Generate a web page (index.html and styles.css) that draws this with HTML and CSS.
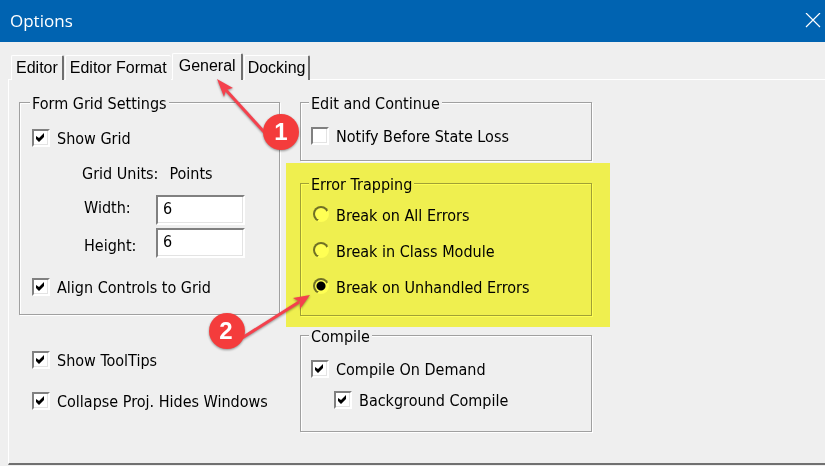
FILE: index.html
```html
<!DOCTYPE html>
<html lang="en">
<head>
<meta charset="utf-8">
<meta name="viewport" content="width=device-width, initial-scale=1">
<title>Options</title>
<link rel="stylesheet" href="styles.css">
</head>
<body>
<main class="dialog">
  <header class="titlebar">
    <h1>Options</h1>
    <button class="close" type="button" aria-label="Close">
      <svg width="16" height="16" viewBox="0 0 16 16" aria-hidden="true"><path d="M1 0 15 14M15 0 1 14" stroke="#fff" stroke-width="1.2" fill="none"/></svg>
    </button>
  </header>

  <div class="tabs" role="tablist">
    <button class="tab" type="button" role="tab">Editor</button>
    <button class="tab tab-wide" type="button" role="tab">Editor Format</button>
    <button class="tab tab-active" type="button" role="tab" aria-selected="true">General</button>
    <button class="tab" type="button" role="tab">Docking</button>
  </div>

  <form class="panel">
    <div class="column">
      <fieldset class="group group-grid">
        <legend>Form Grid Settings</legend>
        <label class="option"><input type="checkbox" checked>Show Grid</label>
        <p class="units"><span>Grid Units:</span><span>Points</span></p>
        <div class="fields">
          <div class="field-labels">
            <label for="grid-width">Width:</label>
            <label for="grid-height">Height:</label>
          </div>
          <div class="field-inputs">
            <input id="grid-width" type="text" value="6">
            <input id="grid-height" type="text" value="6">
          </div>
        </div>
        <label class="option"><input type="checkbox" checked>Align Controls to Grid</label>
      </fieldset>
      <div class="loose">
        <label class="option"><input type="checkbox" checked>Show ToolTips</label>
        <label class="option"><input type="checkbox" checked>Collapse Proj. Hides Windows</label>
      </div>
    </div>

    <div class="column">
      <fieldset class="group group-edit">
        <legend>Edit and Continue</legend>
        <label class="option"><input type="checkbox">Notify Before State Loss</label>
      </fieldset>
      <div class="marked">
        <fieldset class="group group-errors">
          <legend>Error Trapping</legend>
          <label class="option"><input type="radio" name="trap">Break on All Errors</label>
          <label class="option"><input type="radio" name="trap">Break in Class Module</label>
          <label class="option"><input type="radio" name="trap" checked>Break on Unhandled Errors</label>
        </fieldset>
      </div>
      <fieldset class="group group-compile">
        <legend>Compile</legend>
        <label class="option"><input type="checkbox" checked>Compile On Demand</label>
        <label class="option option-nested"><input type="checkbox" checked>Background Compile</label>
      </fieldset>
    </div>
  </form>

  <svg class="callouts" width="340" height="360" viewBox="0 0 340 360" aria-hidden="true">
    <g class="callout">
      <path d="M265 133 225 89" stroke="#f4414d" stroke-width="3"/>
      <path d="M217 79 233 88 226 90 224 97Z" fill="#f4414d"/>
      <circle cx="281" cy="132" r="18"/>
      <text x="281" y="140">1</text>
    </g>
    <g class="callout">
      <path d="M242 338 299 302" stroke="#f4414d" stroke-width="3"/>
      <path d="M310 295 300 309 300 302 293 298Z" fill="#f4414d"/>
      <circle cx="227" cy="331" r="18"/>
      <text x="226" y="339">2</text>
    </g>
  </svg>
</main>
</body>
</html>
```
FILE: styles.css
```css
* { box-sizing: border-box; }

body {
  margin: 0;
  background: #efefef;
  color: #000;
  font: 16px/20px "DejaVu Sans Condensed", "Noto Sans", sans-serif;
}

.dialog { position: relative; }

.titlebar {
  display: flex;
  align-items: center;
  justify-content: space-between;
  height: 42px;
  padding: 0 4px 0 10px;
  background: #0063b1;
  color: #fff;
}

.titlebar h1 {
  margin: 0;
  font: 400 17px/20px "Open Sans", sans-serif;
}

.close {
  display: flex;
  padding: 0;
  border: 0;
  background: none;
}

.tabs {
  display: flex;
  align-items: flex-end;
  gap: 1px;
  height: 38px;
  padding-left: 11px;
}

.tab {
  height: 25px;
  padding: 0 4px;
  border: 1px solid #fff;
  border-right: 2px solid #707070;
  border-bottom: 0;
  border-radius: 2px 2px 0 0;
  background: #efefef;
  color: #000;
  font: 16px/24px "Liberation Sans", sans-serif;
}

.tab:last-child { padding: 0 3px; }

.tab-wide { border-right: 0; }

.tab-active {
  position: relative;
  height: 27px;
  padding: 0 5px 3px 6px;
}

.panel {
  display: flex;
  gap: 20px;
  margin: -1px 0 0 8px;
  padding: 12px 10px 31px;
  border: solid;
  border-width: 1px 0 2px 1px;
  border-color: #fff #fff #707070;
}

.column:first-child { width: 261px; }
.column:last-child { width: 292px; }

.group {
  min-width: 0;
  margin: 0;
  padding: 0 10px;
  border: 1px solid #a0a0a0;
  box-shadow: 1px 1px #fff, inset 1px 1px #fff;
}

legend {
  margin-left: -2px;
  padding: 4px 2px 0;
  background: #efefef;
  line-height: 16px;
}

.option {
  display: flex;
  align-items: flex-start;
  gap: 7px;
  height: 20px;
  line-height: 22px;
  white-space: nowrap;
}

input {
  flex: none;
  margin: 0;
  appearance: none;
}

input[type="checkbox"] {
  width: 18px;
  height: 18px;
  margin-top: 1px;
  border: 2px solid;
  border-color: #808080 #fff #fff #808080;
  background: #fff;
  box-shadow: inset -1px -1px #e3e3e3;
}

input[type="checkbox"]:checked {
  background: #fff url("data:image/svg+xml,%3Csvg xmlns='http://www.w3.org/2000/svg' viewBox='0 0 14 14'%3E%3Cpath d='M2 5v3l3 3 5-5V2L5 7Z'/%3E%3C/svg%3E") center / 14px 14px;
}

input[type="radio"] {
  --dot: #fff;
  width: 16px;
  height: 16px;
  margin: 1px 0 0 2px;
  border: 2px solid transparent;
  border-radius: 50%;
  background:
    radial-gradient(circle, var(--dot) 4px, #fff 5px) padding-box,
    linear-gradient(135deg, #707070 58%, #fff 62%) border-box;
}

input[type="radio"]:checked { --dot: #000; }

.group-grid {
  height: 223px;
  padding: 0 12px;
}

.group-grid .option:first-of-type { margin-top: 16px; }

.units {
  display: flex;
  gap: 11px;
  margin: 16px 0 11px 50px;
}

.fields {
  display: flex;
  align-items: center;
  margin: 0 0 19px 52px;
}

.field-labels,
.field-inputs {
  display: grid;
}

.field-labels {
  gap: 18px;
  width: 72px;
}

.field-inputs {
  gap: 3px;
  width: 89px;
}

.group-grid .fields + .option { margin-top: 0; }

input[type="text"] {
  width: 100%;
  height: 30px;
  padding: 0 5px 4px;
  border: 2px solid;
  border-color: #808080 #fff #fff #808080;
  box-shadow: inset -1px -1px #e3e3e3;
  background: #fff;
  font: inherit;
}

.loose {
  display: grid;
  gap: 21px;
  padding: 35px 13px 0;
}

.group-edit { height: 69px; }
.group-edit .option { margin-top: 14px; }

.marked {
  position: relative;
  margin: 12px 0 9px;
}

.marked::after {
  content: "";
  position: absolute;
  inset: -10px -18px -11px -14px;
  background: #ffff54;
  mix-blend-mode: multiply;
  pointer-events: none;
}

.group-errors {
  display: grid;
  gap: 16px;
  height: 143px;
  padding-top: 12px;
  align-content: start;
}

.group-compile { height: 107px; }
.group-compile .option { margin-top: 14px; }
.group-compile .option-nested { margin: 11px 0 0 23px; }

.callouts {
  position: absolute;
  top: 0;
  left: 0;
  pointer-events: none;
}

.callout { filter: drop-shadow(0 1px 1px #0006); }
.callout circle { fill: #f43c3c; }

.callout text {
  fill: #fff;
  font: 700 24px "Liberation Sans", sans-serif;
  text-anchor: middle;
}
```
